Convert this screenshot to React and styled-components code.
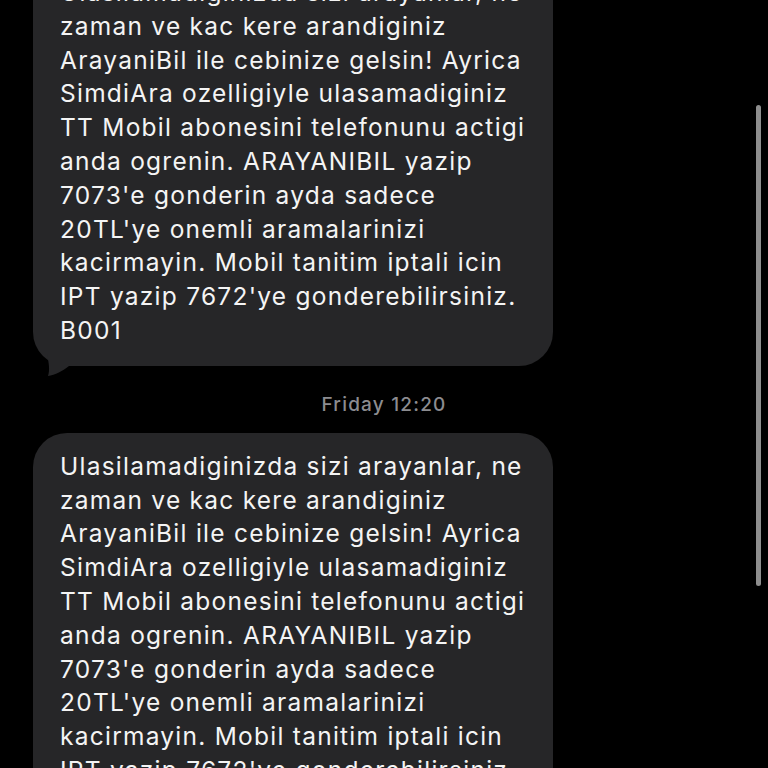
import styled, { createGlobalStyle } from "styled-components";

const GlobalStyle = createGlobalStyle`
    html, body {
        margin: 0;
        padding: 0;
        background: #000;
        overflow: hidden;
    }
`;

const Screen = styled.div`
    position: relative;
    width: 768px;
    height: 768px;
    overflow: hidden;
    background: #000;
    font-family: Inter, "Liberation Sans", sans-serif;
`;

const Thread = styled.div`
    display: flex;
    flex-direction: column;
    margin-top: -41px;
`;

const Bubble = styled.div`
    position: relative;
    width: 520px;
    margin-left: 33px;
    box-sizing: border-box;
    padding: 17px 10px 18px 27px;
    background: #262628;
    border-radius: 34px;
    color: #f4f4f4;
    font-size: 24.5px;
    letter-spacing: 1.25px;
    line-height: 33.8px;
    white-space: pre-line;
`;

const Tail = styled.svg`
    position: absolute;
    left: 8px;
    bottom: -12px;
    width: 30px;
    height: 24px;
`;

const Stamp = styled.div`
    margin: 26px 0 15px 0;
    text-align: center;
    color: #8c8c90;
    font-size: 19px;
    font-weight: 500;
    letter-spacing: 1.2px;
    line-height: 26px;
`;

const Scrollbar = styled.div`
    position: absolute;
    top: 105px;
    left: 756px;
    width: 5px;
    height: 481px;
    border-radius: 3px;
    background: #8e8e8e;
`;

const message = [
    "Ulasilamadiginizda sizi arayanlar, ne",
    "zaman ve kac kere arandiginiz",
    "ArayaniBil ile cebinize gelsin! Ayrica",
    "SimdiAra ozelligiyle ulasamadiginiz",
    "TT Mobil abonesini telefonunu actigi",
    "anda ogrenin. ARAYANIBIL yazip",
    "7073'e gonderin ayda sadece",
    "20TL'ye onemli aramalarinizi",
    "kacirmayin. Mobil tanitim iptali icin",
    "IPT yazip 7672'ye gonderebilirsiniz.",
    "B001",
].join("\n");

export default function App() {
    return (
        <Screen>
            <GlobalStyle />
            <Thread>
                <Bubble>
                    {message}
                    <Tail viewBox="0 0 30 24">
                        <path d="M6 0 C8 10 9 16 7 22 C14 21 22 17 28 12 L28 0 Z" fill="#262628" />
                    </Tail>
                </Bubble>
                <Stamp>Friday 12:20</Stamp>
                <Bubble>{message}</Bubble>
            </Thread>
            <Scrollbar />
        </Screen>
    );
}
